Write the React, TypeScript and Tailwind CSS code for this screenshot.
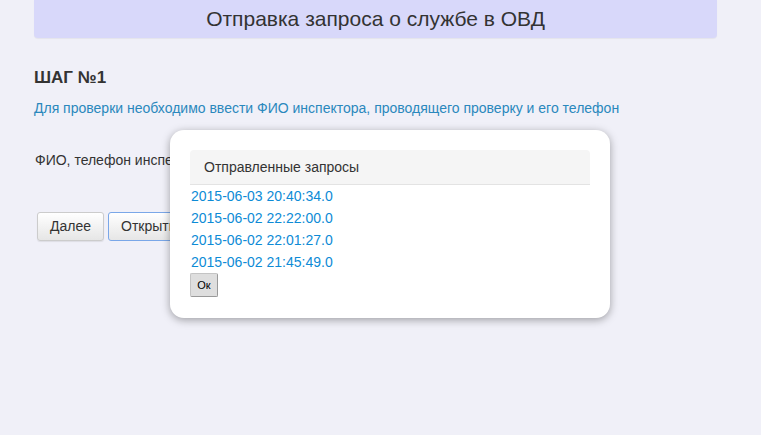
import React from "react";

export default function App() {
  const links = [
    "2015-06-03 20:40:34.0",
    "2015-06-02 22:22:00.0",
    "2015-06-02 22:01:27.0",
    "2015-06-02 21:45:49.0",
  ];
  return (
    <div
      className="relative w-[761px] h-[435px] bg-[#f0f0f8] overflow-hidden text-[#333]"
      style={{ fontFamily: '"Liberation Sans", Arial, sans-serif' }}
    >
      <div className="pl-[34px] w-[717px]">
        <div className="h-[38px] bg-[#d8d8fa] rounded-b-[4px] flex items-center justify-center text-[21px] text-[#333] shadow-[0_1px_1px_rgba(0,0,0,0.05)]">
          Отправка запроса о службе в ОВД
        </div>
        <div className="mt-[30px] text-[17px] font-bold leading-[20px]">ШАГ №1</div>
        <div className="mt-[10px] text-[14px] leading-[20px] text-[#2a88bd]">
          Для проверки необходимо ввести ФИО инспектора, проводящего проверку и его телефон
        </div>
        <div className="mt-[32px] text-[14px] leading-[20px] pl-[1px]">ФИО, телефон инспектора</div>
        <div className="mt-[42px] flex gap-[4px] pl-[3px]">
          <button className="h-[29px] px-[12px] text-[14px] text-[#333] border border-[#ccc] rounded-[3px] bg-gradient-to-b from-white to-[#e6e6e6] shadow-[0_1px_1px_rgba(0,0,0,0.08)]">
            Далее
          </button>
          <button className="h-[29px] w-[80px] pl-[12px] text-left text-[14px] text-[#333] border border-[#7aa7e8] rounded-[3px] bg-gradient-to-b from-white to-[#e6e6e6]">
            Открыть
          </button>
        </div>
      </div>

      <div className="absolute left-[170px] top-[130px] w-[440px] h-[188px] bg-white rounded-[14px] shadow-[0_2px_8px_rgba(0,0,0,0.35)] px-[20px] pt-[20px]">
        <div className="h-[35px] bg-[#f5f5f5] rounded-t-[4px] border-b border-[#e3e3e3] flex items-center pl-[14px] text-[14px] text-[#333]">
          Отправленные запросы
        </div>
        <div className="pl-[1px]">
          {links.map((l) => (
            <div key={l} className="text-[14px] leading-[22px] text-[#0d8bd6]">
              {l}
            </div>
          ))}
        </div>
        <button className="h-[24px] w-[28px] bg-[#dedede] border border-[#c4c4c4] border-r-[#999] border-b-[#999] rounded-[2px] text-[11px] text-black flex items-center justify-center">
          Ок
        </button>
      </div>
    </div>
  );
}
